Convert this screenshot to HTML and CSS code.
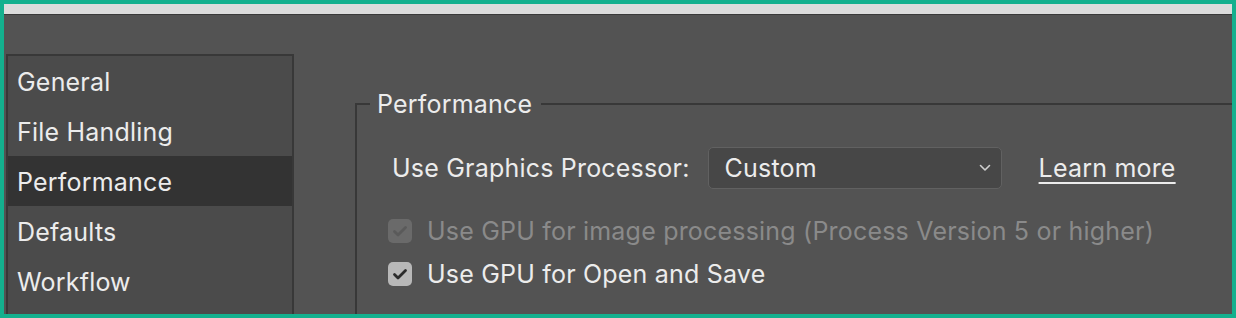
FILE: index.html
```html
<!DOCTYPE html>
<html lang="en">

<head>
    <meta charset="UTF-8">
    <meta name="viewport" content="width=device-width, initial-scale=1.0">
    <title>Preferences</title>
    <link rel="stylesheet" href="styles.css">
</head>

<body>
    <div class="window">
        <div class="title-bar"></div>
        <div class="main">
            <ul class="sidebar">
                <li>General</li>
                <li>File Handling</li>
                <li class="selected">Performance</li>
                <li>Defaults</li>
                <li>Workflow</li>
            </ul>
            <div class="panel">
                <fieldset class="group">
                    <legend>Performance</legend>
                    <div class="row gpu-row">
                        <label for="gpu-select">Use Graphics Processor:</label>
                        <div class="select">
                            <span>Custom</span>
                            <svg class="chevron" width="12" height="8" viewBox="0 0 12 8">
                                <path d="M1.5 1.5 L6 6 L10.5 1.5" fill="none" stroke="#cfcfcf" stroke-width="1.6" stroke-linecap="round" stroke-linejoin="round" />
                            </svg>
                        </div>
                        <a class="learn-more" href="#">Learn more</a>
                    </div>
                    <div class="row check-row disabled">
                        <span class="checkbox">
                            <svg width="16" height="16" viewBox="0 0 16 16">
                                <path d="M2.5 8.5 L6 12 L13.5 4.5" fill="none" stroke="#5a5a5a" stroke-width="2.8" stroke-linecap="round" stroke-linejoin="round" />
                            </svg>
                        </span>
                        <span>Use GPU for image processing (Process Version 5 or higher)</span>
                    </div>
                    <div class="row check-row second">
                        <span class="checkbox checked">
                            <svg width="16" height="16" viewBox="0 0 16 16">
                                <path d="M2.5 8.5 L6 12 L13.5 4.5" fill="none" stroke="#2b2b2b" stroke-width="2.8" stroke-linecap="round" stroke-linejoin="round" />
                            </svg>
                        </span>
                        <span>Use GPU for Open and Save</span>
                    </div>
                </fieldset>
            </div>
        </div>
    </div>
</body>

</html>
```

FILE: styles.css
```css
body {
    margin: 0;
    padding: 4px;
    height: 318px;
    box-sizing: border-box;
    background-color: #14b08e;
    font-family: Inter, "Liberation Sans", sans-serif;
    letter-spacing: 0.2px;
    color: #ececec;
    overflow: hidden;
}

.window {
    height: 310px;
    display: flex;
    flex-direction: column;
    background-color: #535353;
    overflow: hidden;
}

.title-bar {
    height: 10px;
    background-color: #dcdcdc;
    border-bottom: 1px solid #3a3a3a;
    flex-shrink: 0;
}

.main {
    flex: 1;
    display: flex;
    min-height: 0;
}

.sidebar {
    list-style: none;
    margin: 39px 0 0 2px;
    padding: 0;
    width: 284px;
    border: 2px solid #383838;
    border-bottom: none;
    background-color: #4b4b4b;
    flex-shrink: 0;
}

.sidebar li {
    height: 50px;
    box-sizing: border-box;
    padding: 3px 0 0 9px;
    line-height: 47px;
    font-size: 25px;
}

.sidebar li.selected {
    background-color: #333333;
}

.panel {
    flex: 1;
    margin-left: 61px;
    min-width: 0;
}

.group {
    margin: 74px -20px 0 0;
    padding: 0 0 40px 13px;
    border: 2px solid #383838;
    border-right: none;
}

.group legend {
    padding: 0 9px 0 7px;
    font-size: 25px;
    line-height: 30px;
}

.row {
    display: flex;
    align-items: center;
    font-size: 25px;
}

.gpu-row {
    margin: 28px 0 0 22px;
    height: 42px;
}

.select {
    margin-left: 18px;
    height: 40px;
    border: 1px solid #616161;
    border-radius: 5px;
    background-color: #474747;
    display: flex;
    align-items: center;
    justify-content: space-between;
    padding: 0 10px 0 16px;
    width: 266px;
}

.learn-more {
    margin-left: 37px;
    color: #ececec;
    text-decoration: underline;
    text-decoration-thickness: 2px;
    text-underline-offset: 5px;
}

.check-row {
    margin: 27px 0 0 18px;
    height: 30px;
}

.check-row.second {
    margin-top: 13px;
}

.check-row.disabled {
    color: #8a8a8a;
}

.checkbox {
    width: 24px;
    height: 24px;
    border-radius: 5px;
    background-color: #6a6a6a;
    display: flex;
    align-items: center;
    justify-content: center;
    margin-right: 15px;
    flex-shrink: 0;
}

.checkbox.checked {
    background-color: #b8b8b8;
}
```
